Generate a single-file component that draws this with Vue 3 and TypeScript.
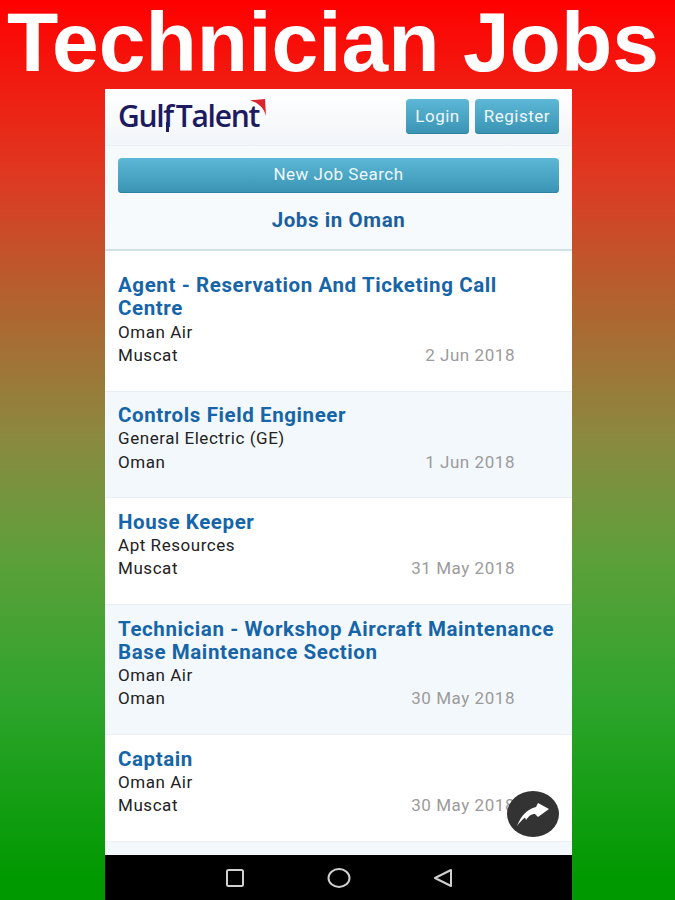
<script setup lang="ts">
type Job = {
  title: string
  company: string
  place: string
  date: string
}

const jobs: Job[] = [
  { title: 'Agent - Reservation And Ticketing Call Centre', company: 'Oman Air', place: 'Muscat', date: '2 Jun 2018' },
  { title: 'Controls Field Engineer', company: 'General Electric (GE)', place: 'Oman', date: '1 Jun 2018' },
  { title: 'House Keeper', company: 'Apt Resources', place: 'Muscat', date: '31 May 2018' },
  { title: 'Technician - Workshop Aircraft Maintenance Base Maintenance Section', company: 'Oman Air', place: 'Oman', date: '30 May 2018' },
  { title: 'Captain', company: 'Oman Air', place: 'Muscat', date: '30 May 2018' },
]
</script>

<template>
  <main class="page">
    <h1 class="headline">Technician Jobs</h1>
    <section class="phone">
      <header class="topbar">
        <div class="logo">
          <span class="logo-text">Gul<span class="logo-f">f</span><span class="logo-gap">Talent</span></span>
          <svg class="logo-mark" viewBox="0 0 16 17" aria-hidden="true">
            <path d="M0 1.500 C5 .5 10 .5 15 0 L16 17 C14 9 8 3.500 0 1.500 Z" fill="#e0222c" />
          </svg>
        </div>
        <div class="auth">
          <button class="btn">Login</button>
          <button class="btn">Register</button>
        </div>
      </header>

      <div class="search">
        <button class="btn wide">New Job Search</button>
        <h2 class="section-title">Jobs in Oman</h2>
      </div>

      <ul class="list">
        <li v-for="job in jobs" :key="job.title" class="job">
          <a class="job-title">{{ job.title }}</a>
          <div class="job-company">{{ job.company }}</div>
          <div class="job-meta">
            <span>{{ job.place }}</span>
            <span class="job-date">{{ job.date }}</span>
          </div>
        </li>
        <li class="job stub" />
      </ul>

      <button class="fab" aria-label="Share">
        <svg viewBox="0 0 36 27" width="36" height="27" aria-hidden="true">
          <path d="M2 25 C6 15 12 8 21 6 L23 2 L34 8 L23 16 L20 13 C16 13 14 15 11 19 L10 16.500 C7 19 5 21 2 25 Z" fill="#fff" />
        </svg>
      </button>

      <nav class="navbar">
        <svg viewBox="0 0 20 20" width="20" height="20" aria-hidden="true">
          <rect x="2" y="2" width="16" height="16" rx="1.500" fill="none" stroke="#d0d0d0" stroke-width="2" />
        </svg>
        <svg viewBox="0 0 24 20" width="24" height="20" aria-hidden="true">
          <ellipse cx="12" cy="10" rx="10.500" ry="9" fill="none" stroke="#d0d0d0" stroke-width="2" />
        </svg>
        <svg viewBox="0 0 20 20" width="20" height="20" aria-hidden="true">
          <path d="M2 10 L18 2 L18 18 Z" fill="none" stroke="#d0d0d0" stroke-width="2" stroke-linejoin="round" />
        </svg>
      </nav>
    </section>
  </main>
</template>

<style>
html,
body {
  margin: 0;
  height: 900px;
  overflow: hidden;
}
</style>

<style scoped>
.page {
  height: 900px;
  overflow: hidden;
  display: flex;
  flex-direction: column;
  align-items: flex-start;
  background: linear-gradient(#ff0000 0, #f5140c 60px, #dd3a22 180px, #b2622f 300px, #8a8a40 440px, #5ca03a 560px, #2ea42c 700px, #009900 880px);
  font-family: Roboto, sans-serif;
}

.headline {
  height: 89px;
  margin: 0;
  padding-left: 7px;
  color: #fff;
  font-family: "Liberation Sans", Arial, sans-serif;
  font-size: 84px;
  font-weight: 700;
  line-height: 85px;
  white-space: nowrap;
}

.phone {
  position: relative;
  width: 467px;
  height: 811px;
  margin-left: 105px;
  display: flex;
  flex-direction: column;
  background: #fff;
}

.topbar {
  height: 57px;
  box-sizing: border-box;
  padding: 10px 13px 0;
  display: flex;
  justify-content: space-between;
  background: linear-gradient(#fff, #f2f5f9);
  border-bottom: 1px solid #eaf0f5;
}

.logo {
  position: relative;
  width: 150px;
  height: 40px;
}

.logo-text {
  display: block;
  color: #1e1a60;
  font-family: "Open Sans", sans-serif;
  font-size: 30px;
  font-weight: 600;
  line-height: 34px;
  letter-spacing: -1.3px;
}

.logo-f {
  position: relative;
}

.logo-f::after {
  content: "";
  position: absolute;
  left: 3px;
  top: 27px;
  width: 2.500px;
  height: 10px;
  background: #1e1a60;
}

.logo-gap {
  margin-left: 3px;
}

.logo-mark {
  position: absolute;
  top: 0;
  left: 132px;
  width: 16px;
  height: 17px;
}

.auth {
  display: flex;
  gap: 6px;
  height: 35px;
}

.btn {
  padding: 0 9px 1px;
  height: 35px;
  border: 0;
  border-radius: 4px;
  background: linear-gradient(#5cb8d6, #3a93b3);
  box-shadow: inset 0 -1px 0 #2b84a4;
  color: #eef7fb;
  font-family: Roboto, sans-serif;
  font-size: 17px;
  letter-spacing: 0.5px;
}

.btn.wide {
  display: block;
  width: 100%;
  padding-bottom: 3px;
}

.search {
  height: 105px;
  box-sizing: border-box;
  padding: 12px 13px 0;
  background: #f6fafd;
  border-bottom: 2px solid #cfe2e6;
}

.section-title {
  margin: 15px 0 0;
  color: #1c5f9e;
  font-size: 20.500px;
  font-weight: 700;
  line-height: 24px;
  letter-spacing: 0.6px;
  text-align: center;
}

.list {
  margin: 0;
  padding: 0;
  list-style: none;
  flex: 1;
  overflow: hidden;
}

.job {
  padding: 12.500px 13px 23.500px;
  border-bottom: 1px solid #e8eef2;
  font-size: 17px;
  line-height: 23.250px;
  color: #222;
  letter-spacing: 0.55px;
}

.job:first-child {
  padding-top: 23px;
}

.job:nth-child(even) {
  background: #f3f8fc;
}

.job-title {
  display: block;
  color: #1565a8;
  font-size: 20.500px;
  font-weight: 700;
  line-height: 23.250px;
  letter-spacing: 0.6px;
}

.job-meta {
  display: flex;
  justify-content: space-between;
  padding-right: 44px;
}

.job-date {
  color: #9b9b9b;
}

.stub {
  height: 40px;
  padding: 0;
  border: 0;
}

.fab {
  position: absolute;
  right: 13px;
  top: 702px;
  width: 52px;
  height: 46px;
  padding: 0;
  display: flex;
  align-items: center;
  justify-content: center;
  border: 0;
  border-radius: 50%;
  background: #333;
}

.navbar {
  height: 45px;
  flex: none;
  display: flex;
  align-items: center;
  justify-content: center;
  gap: 82px;
  background: #000;
}
</style>
